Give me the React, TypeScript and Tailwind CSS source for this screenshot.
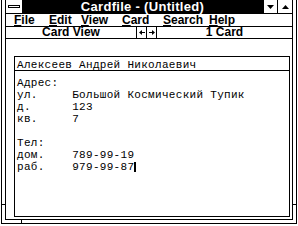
import React from 'react';

const ui = { fontFamily: '"Liberation Sans", Arial, sans-serif' };
const mono = { fontFamily: '"Liberation Mono", "DejaVu Sans Mono", monospace' };

const menuItems = [
  { label: 'File', w: 'w-[35px]' },
  { label: 'Edit', w: 'w-[32px]' },
  { label: 'View', w: 'w-[41px]' },
  { label: 'Card', w: 'w-[41px]' },
  { label: 'Search', w: 'w-[46px]' },
  { label: 'Help', w: 'w-[30px]' },
];

const lines = [
  'Адрес:',
  'ул.     Большой Космический Тупик',
  'д.      123',
  'кв.     7',
  '',
  'Тел:',
  'дом.    789-99-19',
];

function Tri({ up }: { up?: boolean }) {
  return (
    <svg width="7" height="4" viewBox="0 0 7 4">
      <polygon points={up ? '3.5,0 7,4 0,4' : '0,0 7,0 3.5,4'} fill="#000" />
    </svg>
  );
}

function Arrow({ left }: { left?: boolean }) {
  return (
    <svg width="6" height="5" viewBox="0 0 6 5">
      {left ? (
        <>
          <polygon points="0,2.5 3,0 3,5" fill="#000" />
          <rect x="3" y="2" width="3" height="1" fill="#000" />
        </>
      ) : (
        <>
          <polygon points="6,2.5 3,0 3,5" fill="#000" />
          <rect x="0" y="2" width="3" height="1" fill="#000" />
        </>
      )}
    </svg>
  );
}

export default function App() {
  return (
    <div className="w-[298px] h-[226px] bg-white overflow-hidden text-black" style={ui}>
      <div className="relative ml-[1px] w-[296px] h-[224px] border-x border-b border-black">
        {/* frame corner marks */}
        <div className="absolute left-0 top-[204px] w-[3px] h-[1px] bg-black" />
        <div className="absolute right-0 top-[204px] w-[3px] h-[1px] bg-black" />
        <div className="absolute left-[19px] bottom-0 w-[1px] h-[3px] bg-black" />

        <div className="mx-[3px] mb-[3px] h-[220px] border-x border-b border-black flex flex-col">
          {/* title bar */}
          <div className="h-[14px] flex border-b border-black shrink-0">
            <div className="w-[16px] bg-white flex items-center justify-center">
              <div className="w-[12px] h-[3px] border border-black bg-white" />
            </div>
            <div className="flex-1 bg-black text-white text-[13px] font-bold leading-[13px] text-center tracking-[0.3px]">
              Cardfile - (Untitled)
            </div>
            <div className="w-[14px] bg-white border-l border-black flex items-center justify-center">
              <Tri />
            </div>
            <div className="w-[15px] bg-white border-l border-black flex items-center justify-center">
              <Tri up />
            </div>
          </div>

          {/* menu bar */}
          <div className="h-[13px] flex pl-[8px] border-b border-black shrink-0 text-[12px] font-bold leading-[12px]">
            {menuItems.map(m => (
              <div key={m.label} className={`${m.w} shrink-0`}>
                <span className="underline underline-offset-[1px] decoration-1">{m.label[0]}</span>
                {m.label.slice(1)}
              </div>
            ))}
          </div>

          {/* status bar */}
          <div className="h-[12px] flex border-b border-black shrink-0 text-[12px] font-bold leading-[11px]">
            <div className="w-[130px] text-center">Card View</div>
            <div className="w-[10px] border-l border-black flex items-center justify-center">
              <Arrow left />
            </div>
            <div className="w-[10px] border-l border-black flex items-center justify-center">
              <Arrow />
            </div>
            <div className="flex-1 border-l border-black text-center">1 Card</div>
          </div>

          {/* client area */}
          <div className="flex-1 flex pl-[8px] pt-[17px] pr-[2px] pb-[2px]">
            <div className="flex-1 border border-black flex flex-col text-[11px] tracking-[0.3px]" style={mono}>
              <div className="h-[14px] border-b border-black pl-[2px] pt-[2px] leading-[12px] whitespace-pre">
                Алексеев Андрей Николаевич
              </div>
              <div className="pl-[2px] pt-[6px] leading-[12px] whitespace-pre">
                {lines.map((l, i) => (
                  <div key={i} className="h-[12px]">{l}</div>
                ))}
                <div className="h-[12px] flex items-center">
                  <span>раб.    979-99-87</span>
                  <span className="inline-block w-[2px] h-[10px] bg-black" />
                </div>
              </div>
            </div>
          </div>
        </div>
      </div>
    </div>
  );
}
